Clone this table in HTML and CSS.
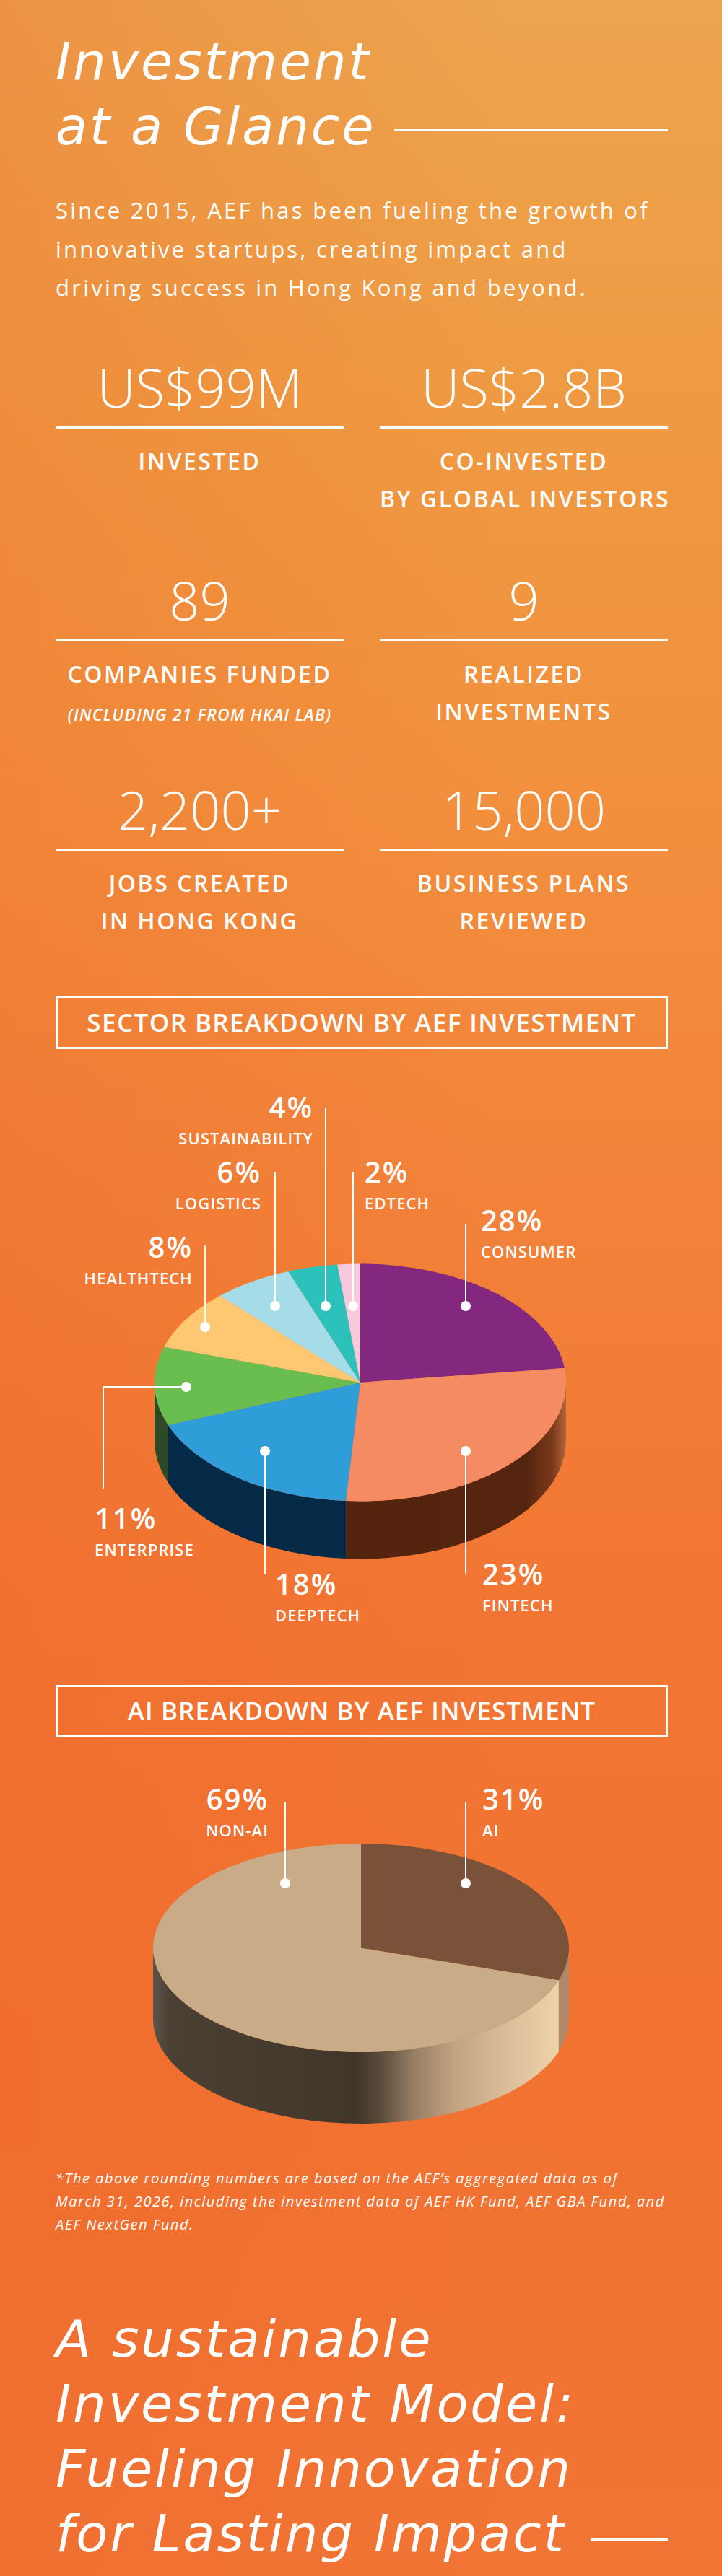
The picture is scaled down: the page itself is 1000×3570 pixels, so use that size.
FILE: index.html
```html
<!DOCTYPE html>
<html lang="en">
<head>
<meta charset="utf-8">
<title>Investment at a Glance</title>
<link rel="stylesheet" href="styles.css">
</head>
<body>
<main class="page">
  <h1 class="headline">
    <span class="head-line">Investment</span>
    <span class="head-line"><span>at a Glance</span><span class="dash dash-top"></span></span>
  </h1>

  <p class="intro">Since 2015, AEF has been fueling the growth of<br>innovative startups, creating impact and<br>driving success in Hong Kong and beyond.</p>

  <section class="stats">
    <div class="stat">
      <div class="value">US$99M</div>
      <div class="rule"></div>
      <div class="label">INVESTED</div>
    </div>
    <div class="stat">
      <div class="value">US$2.8B</div>
      <div class="rule"></div>
      <div class="label">CO-INVESTED<br>BY GLOBAL INVESTORS</div>
    </div>
    <div class="stat">
      <div class="value">89</div>
      <div class="rule"></div>
      <div class="label">COMPANIES FUNDED</div>
      <div class="sub">(INCLUDING 21 FROM HKAI LAB)</div>
    </div>
    <div class="stat">
      <div class="value">9</div>
      <div class="rule"></div>
      <div class="label">REALIZED<br>INVESTMENTS</div>
    </div>
    <div class="stat">
      <div class="value">2,200+</div>
      <div class="rule"></div>
      <div class="label">JOBS CREATED<br>IN HONG KONG</div>
    </div>
    <div class="stat">
      <div class="value">15,000</div>
      <div class="rule"></div>
      <div class="label">BUSINESS PLANS<br>REVIEWED</div>
    </div>
  </section>

  <div class="section-box box-sector">SECTOR BREAKDOWN BY AEF INVESTMENT</div>

  <div class="chart chart-sector">
    <svg class="chart-svg" width="848" height="881" viewBox="0 0 848 881" aria-hidden="true">
      <defs>
        <linearGradient id="salmonSide" gradientUnits="userSpaceOnUse" x1="402" y1="0" x2="707" y2="0">
          <stop offset="0" stop-color="#55240e"/>
          <stop offset="0.82" stop-color="#56250f"/>
          <stop offset="0.94" stop-color="#7a3a1c"/>
          <stop offset="1" stop-color="#b5653c"/>
        </linearGradient>
      </defs>
      <path d="M707,462 A285,164.5 0 0 1 402.12,626.10 L402.12,706.10 A285,164.5 0 0 0 707,542 Z" fill="url(#salmonSide)"/>
      <path d="M402.12,626.10 A285,164.5 0 0 1 155.93,520.95 L155.93,600.95 A285,164.5 0 0 0 402.12,706.10 Z" fill="#052a47"/>
      <path d="M155.93,520.95 A285,164.5 0 0 1 137,462 L137,542 A285,164.5 0 0 0 155.93,600.95 Z" fill="#2c4a25"/>
      <path d="M422,462 L422,297.5 A285,164.5 0 0 1 704.88,441.95 Z" fill="#84287f"/>
      <path d="M422,462 L704.88,441.95 A285,164.5 0 0 1 402.12,626.10 Z" fill="#f48b62"/>
      <path d="M422,462 L402.12,626.10 A285,164.5 0 0 1 155.93,520.95 Z" fill="#2f9dd7"/>
      <path d="M422,462 L155.93,520.95 A285,164.5 0 0 1 150.19,412.53 Z" fill="#6abd4f"/>
      <path d="M422,462 L150.19,412.53 A285,164.5 0 0 1 227.63,341.69 Z" fill="#fec873"/>
      <path d="M422,462 L227.63,341.69 A285,164.5 0 0 1 322.19,307.92 Z" fill="#a6dce8"/>
      <path d="M422,462 L322.19,307.92 A285,164.5 0 0 1 390.23,298.53 Z" fill="#2cc1bb"/>
      <path d="M422,462 L390.23,298.53 A285,164.5 0 0 1 422,297.5 Z" fill="#f8c8dc"/>
      <g stroke="#fff" stroke-width="2" fill="none">
        <path d="M374,82 V356"/>
        <path d="M304,170 V356"/>
        <path d="M412,170 V356"/>
        <path d="M568,242 V356"/>
        <path d="M207,272 V385"/>
        <path d="M181,468 H66 V609"/>
        <path d="M290,557 V728"/>
        <path d="M568,557 V728"/>
      </g>
      <g fill="#fff">
        <circle cx="374" cy="356" r="7"/>
        <circle cx="304" cy="356" r="7"/>
        <circle cx="412" cy="356" r="7"/>
        <circle cx="568" cy="356" r="7"/>
        <circle cx="207" cy="385" r="7"/>
        <circle cx="181" cy="468" r="7"/>
        <circle cx="290" cy="557" r="7"/>
        <circle cx="568" cy="557" r="7"/>
      </g>
    </svg>
    <div class="tag tag-right l-sust"><div class="pct">4%</div><div class="name">SUSTAINABILITY</div></div>
    <div class="tag tag-right l-log"><div class="pct">6%</div><div class="name">LOGISTICS</div></div>
    <div class="tag l-ed"><div class="pct">2%</div><div class="name">EDTECH</div></div>
    <div class="tag l-con"><div class="pct">28%</div><div class="name">CONSUMER</div></div>
    <div class="tag tag-right l-health"><div class="pct">8%</div><div class="name">HEALTHTECH</div></div>
    <div class="tag l-ent"><div class="pct">11%</div><div class="name">ENTERPRISE</div></div>
    <div class="tag l-deep"><div class="pct">18%</div><div class="name">DEEPTECH</div></div>
    <div class="tag l-fin"><div class="pct">23%</div><div class="name">FINTECH</div></div>
  </div>

  <div class="section-box box-ai">AI BREAKDOWN BY AEF INVESTMENT</div>

  <div class="chart chart-ai">
    <svg class="chart-svg" width="848" height="596" viewBox="0 0 848 596" aria-hidden="true">
      <defs>
        <linearGradient id="nonAiSide" gradientUnits="userSpaceOnUse" x1="135" y1="0" x2="697" y2="0">
          <stop offset="0" stop-color="#5e5448"/>
          <stop offset="0.04" stop-color="#4a4034"/>
          <stop offset="0.5" stop-color="#41362a"/>
          <stop offset="0.56" stop-color="#5a4a3a"/>
          <stop offset="0.64" stop-color="#957d63"/>
          <stop offset="0.74" stop-color="#c2a27f"/>
          <stop offset="0.88" stop-color="#dcbf9a"/>
          <stop offset="1" stop-color="#edd2a9"/>
        </linearGradient>
      </defs>
      <path d="M696.90,337.15 A288,144.5 0 0 1 135,292.5 L135,391.5 A288,144.5 0 0 0 696.90,436.15 Z" fill="url(#nonAiSide)"/>
      <path d="M711,292.5 A288,144.5 0 0 1 696.90,337.15 L696.90,436.15 A288,144.5 0 0 0 711,391.5 Z" fill="#b08868"/>
      <path d="M423,292.5 L696.90,337.15 A288,144.5 0 1 1 423,148 Z" fill="#c9ab88"/>
      <path d="M423,292.5 L423,148 A288,144.5 0 0 1 696.90,337.15 Z" fill="#7a5239"/>
      <g stroke="#fff" stroke-width="2" fill="none">
        <path d="M318,90 V203"/>
        <path d="M568,90 V203"/>
      </g>
      <g fill="#fff">
        <circle cx="318" cy="203" r="7"/>
        <circle cx="568" cy="203" r="7"/>
      </g>
    </svg>
    <div class="tag tag-right l-nonai"><div class="pct">69%</div><div class="name">NON-AI</div></div>
    <div class="tag l-ai"><div class="pct">31%</div><div class="name">AI</div></div>
  </div>

  <p class="note">*The above rounding numbers are based on the AEF’s aggregated data as of<br>March 31, 2026, including the investment data of AEF HK Fund, AEF GBA Fund, and<br>AEF NextGen Fund.</p>

  <h2 class="headline closing">
    <span class="head-line">A sustainable</span>
    <span class="head-line">Investment Model:</span>
    <span class="head-line">Fueling Innovation</span>
    <span class="head-line"><span>for Lasting Impact</span><span class="dash dash-bottom"></span></span>
  </h2>
</main>
</body>
</html>
```

FILE: styles.css
```css
html {
  background: #f07030;
}

body {
  margin: 0;
  width: 1000px;
  min-height: 3570px;
  color: #fff;
  font-family: "Open Sans", "DejaVu Sans", sans-serif;
  background:
    linear-gradient(90deg, rgba(236, 92, 34, 0.22) 0%, rgba(236, 92, 34, 0) 70%),
    linear-gradient(180deg, #eca44e 0%, #ef9a42 16%, #f28f3d 32%, #f2833a 45%, #f27633 62%, #f17231 80%, #f17535 100%);
}

.page {
  padding: 40px 75px 15px 77px;
}

/* Headlines */
.headline {
  margin: 0;
  font-family: "DejaVu Sans", "Open Sans", sans-serif;
  font-size: 72px;
  font-weight: 400;
  font-style: italic;
  line-height: 90px;
  letter-spacing: 0.04em;
}

.head-line {
  display: flex;
  align-items: flex-start;
  white-space: nowrap;
}

.dash {
  display: block;
  height: 3px;
  background: #fff;
}

.dash-top {
  flex: 1;
  margin: 49px 0 0 26px;
}

.dash-bottom {
  width: 107px;
  margin: 52px 0 0 auto;
}

.closing {
  margin-top: 97px;
}

/* Intro */
.intro {
  margin: 45px 0 0;
  font-size: 31px;
  line-height: 53.5px;
  letter-spacing: 0.105em;
  white-space: nowrap;
}

/* Stats */
.stats {
  display: grid;
  grid-template-columns: minmax(0, 1fr) minmax(0, 1fr);
  grid-template-rows: 295px 290px auto;
  column-gap: 50px;
  margin-top: 71px;
}

.stat {
  min-width: 0;
  text-align: center;
}

.value {
  font-size: 74px;
  font-weight: 300;
  line-height: 80px;
}

.rule {
  height: 3px;
  margin-top: 14px;
  background: #fff;
}

.label {
  margin-top: 19px;
  font-size: 32px;
  font-weight: 600;
  line-height: 52px;
  letter-spacing: 0.08em;
  white-space: nowrap;
}

.sub {
  font-size: 23px;
  font-weight: 600;
  font-style: italic;
  line-height: 60px;
  letter-spacing: 0.05em;
  white-space: nowrap;
}

/* Section title boxes */
.section-box {
  border: 3px solid #fff;
  font-size: 35px;
  font-weight: 600;
  letter-spacing: 0.04em;
  text-align: center;
  white-space: nowrap;
}

.box-sector {
  margin-top: 78px;
  line-height: 68px;
}

.box-ai {
  line-height: 66px;
  letter-spacing: 0.03em;
}

/* Charts */
.chart {
  position: relative;
  width: 848px;
}

.chart-sector {
  height: 881px;
}

.chart-ai {
  height: 596px;
}

.chart-svg {
  position: absolute;
  left: 0;
  top: 0;
  display: block;
}

.tag {
  position: absolute;
  white-space: nowrap;
}

.tag-right {
  text-align: right;
}

.pct {
  font-size: 40px;
  font-weight: 600;
  line-height: 55px;
  letter-spacing: 0.05em;
}

.name {
  margin-top: 1.5px;
  font-size: 22px;
  font-weight: 600;
  line-height: 30px;
  letter-spacing: 0.05em;
}

.l-sust   { top: 52px;  right: 491px; }
.l-log    { top: 142px; right: 563px; }
.l-ed     { top: 142px; left: 428px; }
.l-con    { top: 209px; left: 589px; }
.l-health { top: 246px; right: 658px; }
.l-ent    { top: 622px; left: 54px; }
.l-deep   { top: 713px; left: 304px; }
.l-fin    { top: 699px; left: 591px; }
.l-nonai  { top: 58px;  right: 553px; }
.l-ai     { top: 58px;  left: 591px; }

/* Footnote */
.note {
  margin: 0;
  font-size: 20px;
  font-style: italic;
  line-height: 32px;
  letter-spacing: 0.075em;
  white-space: nowrap;
}
```
